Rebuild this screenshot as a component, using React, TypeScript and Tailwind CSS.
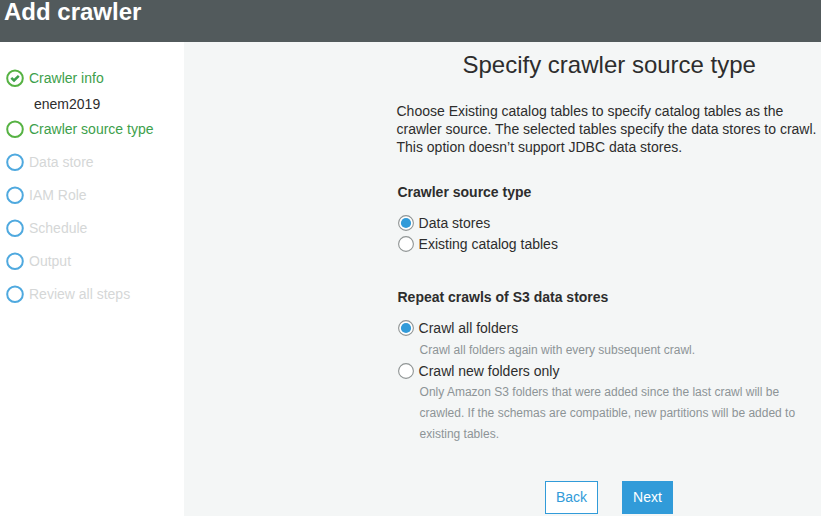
import { useState } from "react";

type StepState = "done" | "active" | "pending";

const steps: { label: string; state: StepState; detail?: string }[] = [
  { label: "Crawler info", state: "done", detail: "enem2019" },
  { label: "Crawler source type", state: "active" },
  { label: "Data store", state: "pending" },
  { label: "IAM Role", state: "pending" },
  { label: "Schedule", state: "pending" },
  { label: "Output", state: "pending" },
  { label: "Review all steps", state: "pending" },
];

function StepIcon({ state }: { state: StepState }) {
  return (
    <svg
      viewBox="0 0 18 18"
      className={`size-[18px] shrink-0 ${state === "pending" ? "text-[#4fa9df]" : "text-[#56b243]"}`}
      fill="none"
      stroke="currentColor"
    >
      <circle cx="9" cy="9.2" r="7.8" strokeWidth="2" fill="white" />
      {state === "done" && <path d="M5.3 8.9 8 11.4 12.8 6.9" strokeWidth="2.6" className="text-[#3da04b]" />}
    </svg>
  );
}

function Radio({ label, checked, onSelect }: { label: string; checked: boolean; onSelect: () => void }) {
  return (
    <label className="flex h-[21px] items-center gap-[4.6px]">
      <input type="radio" className="sr-only" checked={checked} onChange={onSelect} />
      <svg viewBox="0 0 16 16" className="size-4 shrink-0">
        <circle cx="8" cy="8" r="7.4" fill="white" stroke="#8f9494" strokeWidth="1.1" />
        {checked && <circle cx="8" cy="8" r="5.1" fill="#319bd9" />}
      </svg>
      <span>{label}</span>
    </label>
  );
}

export default function App() {
  const [source, setSource] = useState("data");
  const [repeat, setRepeat] = useState("all");

  return (
    <div className="flex h-[516px] w-[821px] flex-col overflow-hidden bg-[#f4f6f6] font-['Liberation_Sans',Arial,sans-serif] text-sm text-[#2d2d2d]">
      <header className="h-[42px] shrink-0 bg-[#525a5c] pl-1">
        <h1 className="text-2xl leading-6 font-bold text-white">Add crawler</h1>
      </header>
      <div className="flex min-h-0 flex-1">
        <nav className="w-[184px] shrink-0 bg-white pt-[27px] pl-1.5">
          <ul className="flex flex-col">
            {steps.map((step) => (
              <li key={step.label} className={step.detail ? "" : "mb-[15px]"}>
                <div className="flex h-[18px] items-center gap-[5px]">
                  <StepIcon state={step.state} />
                  <span className={step.state === "pending" ? "text-[#d5d7d7]" : "text-[#3da04b]"}>{step.label}</span>
                </div>
                {step.detail && <div className="pt-2 pb-[7px] pl-7 leading-[18px]">{step.detail}</div>}
              </li>
            ))}
          </ul>
        </nav>
        <main className="flex-1 pl-[212.5px]">
          <h2 className="mt-2 w-[424px] pl-[66px] text-2xl leading-[30px]">Specify crawler source type</h2>
          <p className="mt-[22px] leading-[18px] whitespace-nowrap">
            Choose Existing catalog tables to specify catalog tables as the
            <br />
            crawler source. The selected tables specify the data stores to crawl.
            <br />
            This option doesn’t support JDBC data stores.
          </p>
          <section className="mt-[27px] pl-px">
            <h3 className="leading-[18px] font-bold">Crawler source type</h3>
            <div className="mt-[11px] pl-[0.5px]">
              <Radio label="Data stores" checked={source === "data"} onSelect={() => setSource("data")} />
              <Radio label="Existing catalog tables" checked={source === "catalog"} onSelect={() => setSource("catalog")} />
            </div>
          </section>
          <section className="mt-[34px] pl-px">
            <h3 className="leading-[18px] font-bold">Repeat crawls of S3 data stores</h3>
            <div className="mt-[11px] pl-[0.5px]">
              <Radio label="Crawl all folders" checked={repeat === "all"} onSelect={() => setRepeat("all")} />
              <p className="pt-0.5 pl-[21.6px] text-xs leading-5 text-[#8d9496]">
                Crawl all folders again with every subsequent crawl.
              </p>
              <Radio label="Crawl new folders only" checked={repeat === "new"} onSelect={() => setRepeat("new")} />
              <p className="pt-px pl-[21.6px] text-xs leading-[21px] whitespace-nowrap text-[#8d9496]">
                Only Amazon S3 folders that were added since the last crawl will be
                <br />
                crawled. If the schemas are compatible, new partitions will be added to
                <br />
                existing tables.
              </p>
            </div>
          </section>
          <div className="mt-[36px] flex gap-6 pl-[148.5px]">
            <button className="h-[33px] w-[53px] border border-[#319bd9] bg-white pb-0.5 text-[#319bd9]">Back</button>
            <button className="h-[33px] w-[51px] bg-[#319bd9] pb-0.5 text-white">Next</button>
          </div>
        </main>
      </div>
    </div>
  );
}
